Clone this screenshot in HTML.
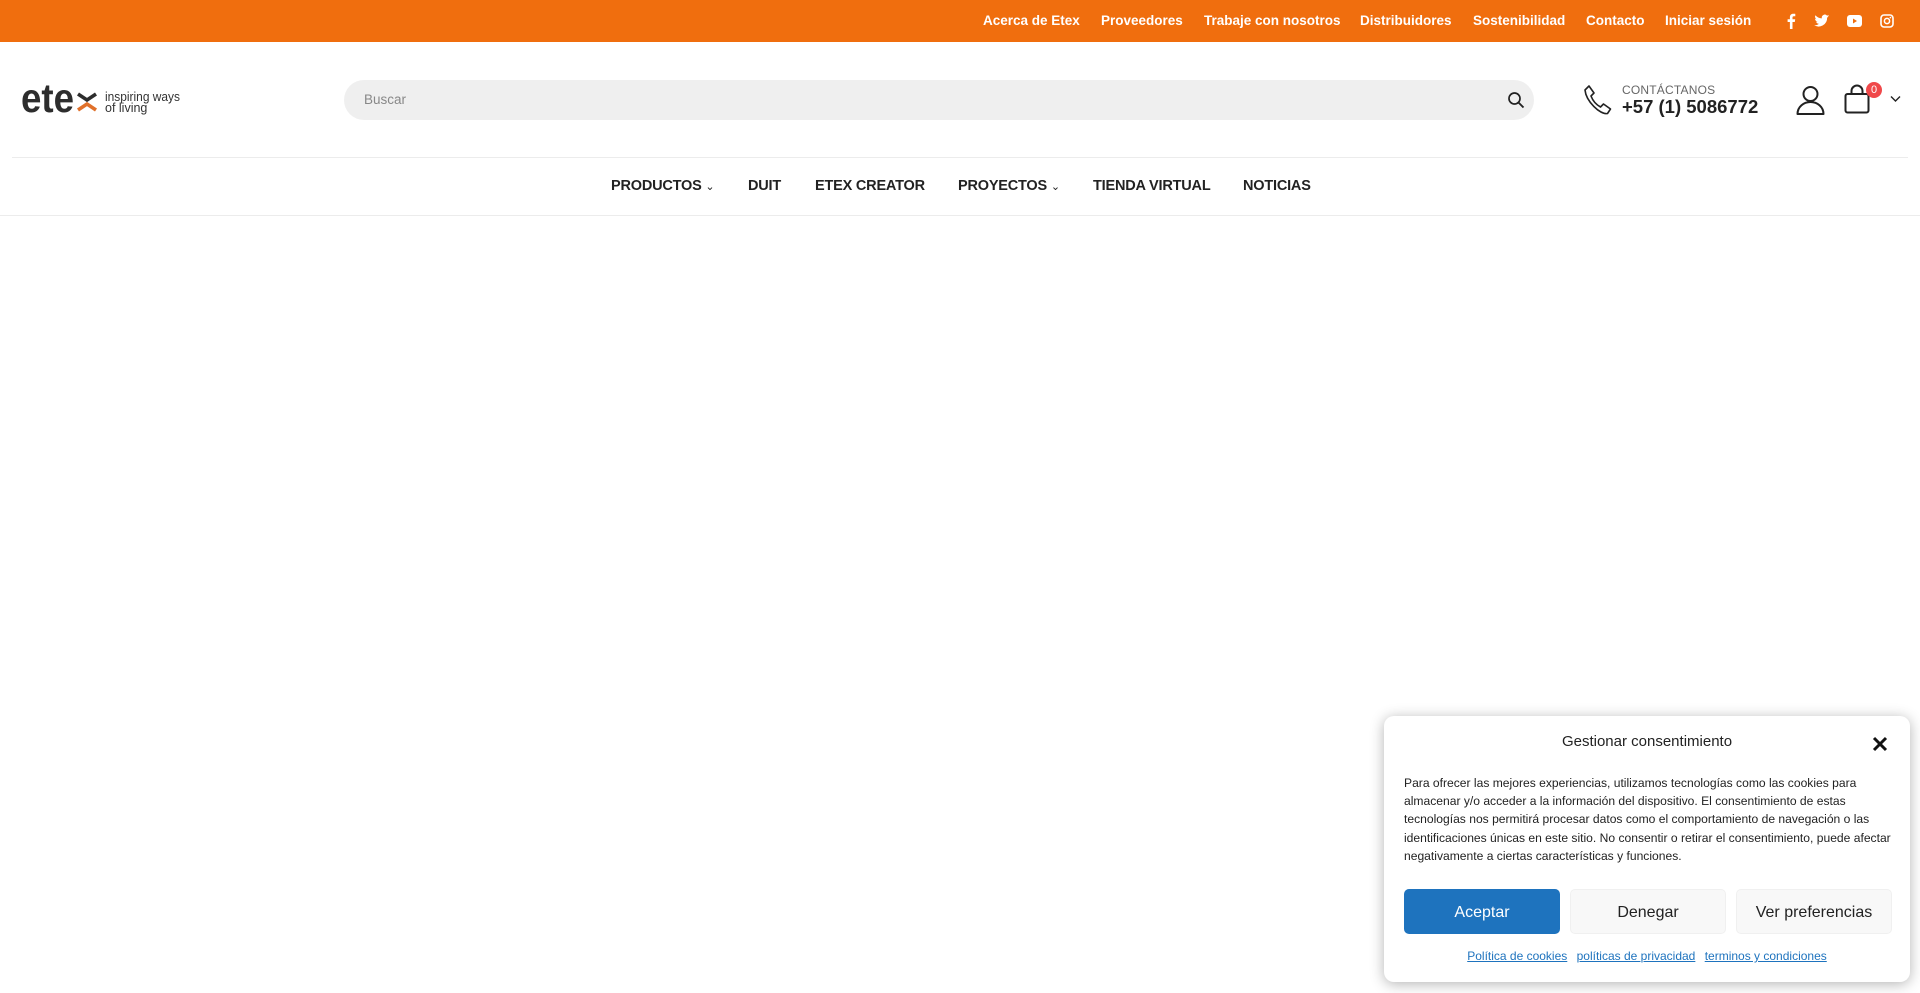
<!DOCTYPE html>
<html><head><meta charset="utf-8">
<style>
*{margin:0;padding:0;box-sizing:border-box}
html,body{width:1920px;height:993px;overflow:hidden;background:#fff;font-family:"Liberation Sans",Arial,sans-serif;position:relative}
.top{position:absolute;left:0;top:0;width:1920px;height:42px;background:#f06e0e}
.top a{position:absolute;top:13px;color:#fff;font-weight:bold;font-size:13.5px;text-decoration:none;white-space:nowrap}
.soc{position:absolute;top:13px}
.search{position:absolute;left:344px;top:80px;width:1190px;height:40px;border-radius:20px;background:#efefef}
.search span{position:absolute;left:20px;top:12px;font-size:13.5px;color:#888}
.line{position:absolute;left:12px;width:1896px;height:1px;background:#ececec}
.nav a{position:absolute;top:178px;font-size:14.5px;font-weight:bold;color:#222;text-decoration:none;white-space:nowrap;letter-spacing:-.2px}
.modal{position:absolute;left:1384px;top:716px;width:526px;height:266px;background:#fff;border-radius:10px;box-shadow:0 2px 14px rgba(0,0,0,.3)}
.modal h3{position:absolute;left:0;width:526px;text-align:center;top:17px;font-weight:normal;font-size:15px;color:#222}
.modal p{position:absolute;left:20px;top:58px;width:494px;font-size:12.1px;line-height:18.2px;color:#222}
.btn{position:absolute;top:173px;height:45px;width:156px;border-radius:5px;text-align:center;line-height:45px;font-size:16px;color:#222;background:#f8f8f8;border:1px solid #f0f0f0}
.links{position:absolute;top:233px;left:0;width:526px;text-align:center;font-size:12px}
.links a{color:#1e73be;text-decoration:underline;margin:0 3px}
</style></head><body>
<div class="top">
<a style="left:983px">Acerca de Etex</a>
<a style="left:1101px">Proveedores</a>
<a style="left:1204px">Trabaje con nosotros</a>
<a style="left:1360px">Distribuidores</a>
<a style="left:1473px">Sostenibilidad</a>
<a style="left:1586px">Contacto</a>
<a style="left:1665px">Iniciar sesión</a>
<svg class="soc" style="left:1785px" width="12" height="16" viewBox="0 0 12 16"><path d="M7.5 16V9h2.3l.4-2.7H7.5V4.6c0-.8.3-1.3 1.4-1.3h1.4V.9C10 .8 9.2.8 8.3.8 6.3.8 4.9 2 4.9 4.2v2.1H2.6V9h2.3v7z" fill="#fff"/></svg>
<svg class="soc" style="left:1814px" width="16" height="16" viewBox="0 0 24 24"><path d="M23 4.6c-.8.4-1.7.6-2.6.7.9-.6 1.6-1.4 2-2.5-.9.5-1.9.9-2.9 1.1a4.5 4.5 0 0 0-7.7 4.1C7.7 7.8 4.4 6 2.2 3.3a4.5 4.5 0 0 0 1.4 6c-.7 0-1.4-.2-2-.6 0 2.2 1.6 4 3.6 4.4-.7.2-1.4.2-2 .1.6 1.8 2.2 3.1 4.2 3.1A9 9 0 0 1 0 18.2 12.8 12.8 0 0 0 19.7 7c.9-.6 1.6-1.4 2.2-2.3z" fill="#fff"/></svg>
<svg class="soc" style="left:1847px;top:14px" width="15" height="14" viewBox="0 0 15 14"><rect x="0" y="1" width="15" height="12" rx="3" fill="#fff"/><path d="M6 4.5v5l4-2.5z" fill="#f06e0e"/></svg>
<svg class="soc" style="left:1880px" width="14" height="16" viewBox="0 0 14 16"><rect x="1" y="2" width="12" height="12" rx="3" fill="none" stroke="#fff" stroke-width="1.6"/><circle cx="7" cy="8" r="2.6" fill="none" stroke="#fff" stroke-width="1.5"/><circle cx="10.4" cy="4.6" r=".8" fill="#fff"/></svg>
</div>

<svg style="position:absolute;left:0;top:75px" width="200" height="50" viewBox="0 75 200 50">
<text x="21" y="112" font-family="Liberation Sans, sans-serif" font-size="41" font-weight="bold" fill="#2d2d2d" textLength="53" lengthAdjust="spacingAndGlyphs">ete</text>
<path d="M78 94l9 6 9-6" fill="none" stroke="#2d2d2d" stroke-width="3.6"/>
<path d="M78 110l9-6 9 6" fill="none" stroke="#e0702a" stroke-width="3.6"/>
<text x="105" y="101" font-family="Liberation Sans, sans-serif" font-size="12.5" fill="#333" textLength="75" lengthAdjust="spacingAndGlyphs">inspiring ways</text>
<text x="105" y="112" font-family="Liberation Sans, sans-serif" font-size="12.5" fill="#333">of living</text>
</svg>

<div class="search"><span>Buscar</span>
<svg style="position:absolute;left:1163px;top:11px" width="18" height="18" viewBox="0 0 18 18"><circle cx="7.5" cy="7.5" r="5.5" fill="none" stroke="#222" stroke-width="1.7"/><path d="M11.5 11.5l5 5" stroke="#222" stroke-width="1.9"/></svg>
</div>

<svg style="position:absolute;left:1583px;top:84px" width="30" height="32" viewBox="0 0 30 32"><path d="M6 2l5 7-3 3c1.5 4 5 8.5 9.5 11l3-3 7 5-3 4.5C17 31 3 17 2 6z" fill="none" stroke="#222" stroke-width="1.6" stroke-linejoin="round"/></svg>
<div style="position:absolute;left:1622px;top:83px;font-size:12px;color:#666;letter-spacing:.2px">CONTÁCTANOS</div>
<div style="position:absolute;left:1622px;top:96px;font-size:18.5px;font-weight:bold;color:#222">+57 (1) 5086772</div>
<svg style="position:absolute;left:1796px;top:85px" width="29" height="30" viewBox="0 0 29 30"><circle cx="14.5" cy="9" r="7" fill="none" stroke="#222" stroke-width="2"/><path d="M1.5 29c0-7 6-12 13-12s13 5 13 12z" fill="none" stroke="#222" stroke-width="2" stroke-linejoin="round"/></svg>
<svg style="position:absolute;left:1844px;top:84px" width="26" height="30" viewBox="0 0 26 30"><rect x="1.5" y="10" width="23" height="18.5" rx="2" fill="none" stroke="#222" stroke-width="2"/><path d="M7.5 10V7a5.5 5.5 0 0 1 11 0v3" fill="none" stroke="#222" stroke-width="2"/></svg>
<div style="position:absolute;left:1866px;top:82px;width:16px;height:16px;border-radius:50%;background:#f0484a;color:#fff;font-size:11px;text-align:center;line-height:16px">0</div>
<svg style="position:absolute;left:1890px;top:95px" width="11" height="8" viewBox="0 0 11 8"><path d="M1 1.5l4.5 4.5 4.5-4.5" fill="none" stroke="#222" stroke-width="1.4"/></svg>

<div class="line" style="top:157px"></div>
<div class="line" style="top:215px;left:0;width:1920px"></div>

<div class="nav">
<a style="left:611px">PRODUCTOS <span style="font-weight:normal;font-size:11px">&#8964;</span></a>
<a style="left:748px">DUIT</a>
<a style="left:815px">ETEX CREATOR</a>
<a style="left:958px">PROYECTOS <span style="font-weight:normal;font-size:11px">&#8964;</span></a>
<a style="left:1093px">TIENDA VIRTUAL</a>
<a style="left:1243px">NOTICIAS</a>
</div>

<div class="modal">
<h3>Gestionar consentimiento</h3>
<svg style="position:absolute;left:488px;top:20px" width="16" height="16" viewBox="0 0 16 16"><path d="M2 2l12 12M14 2L2 14" stroke="#111" stroke-width="3"/></svg>
<p>Para ofrecer las mejores experiencias, utilizamos tecnologías como las cookies para almacenar y/o acceder a la información del dispositivo. El consentimiento de estas tecnologías nos permitirá procesar datos como el comportamiento de navegación o las identificaciones únicas en este sitio. No consentir o retirar el consentimiento, puede afectar negativamente a ciertas características y funciones.</p>
<div class="btn" style="left:20px;background:#1e73be;border-color:#1e73be;color:#fff">Aceptar</div>
<div class="btn" style="left:186px">Denegar</div>
<div class="btn" style="left:352px">Ver preferencias</div>
<div class="links"><a>Política de cookies</a> <a>políticas de privacidad</a> <a>terminos y condiciones</a></div>
</div>
</body></html>
